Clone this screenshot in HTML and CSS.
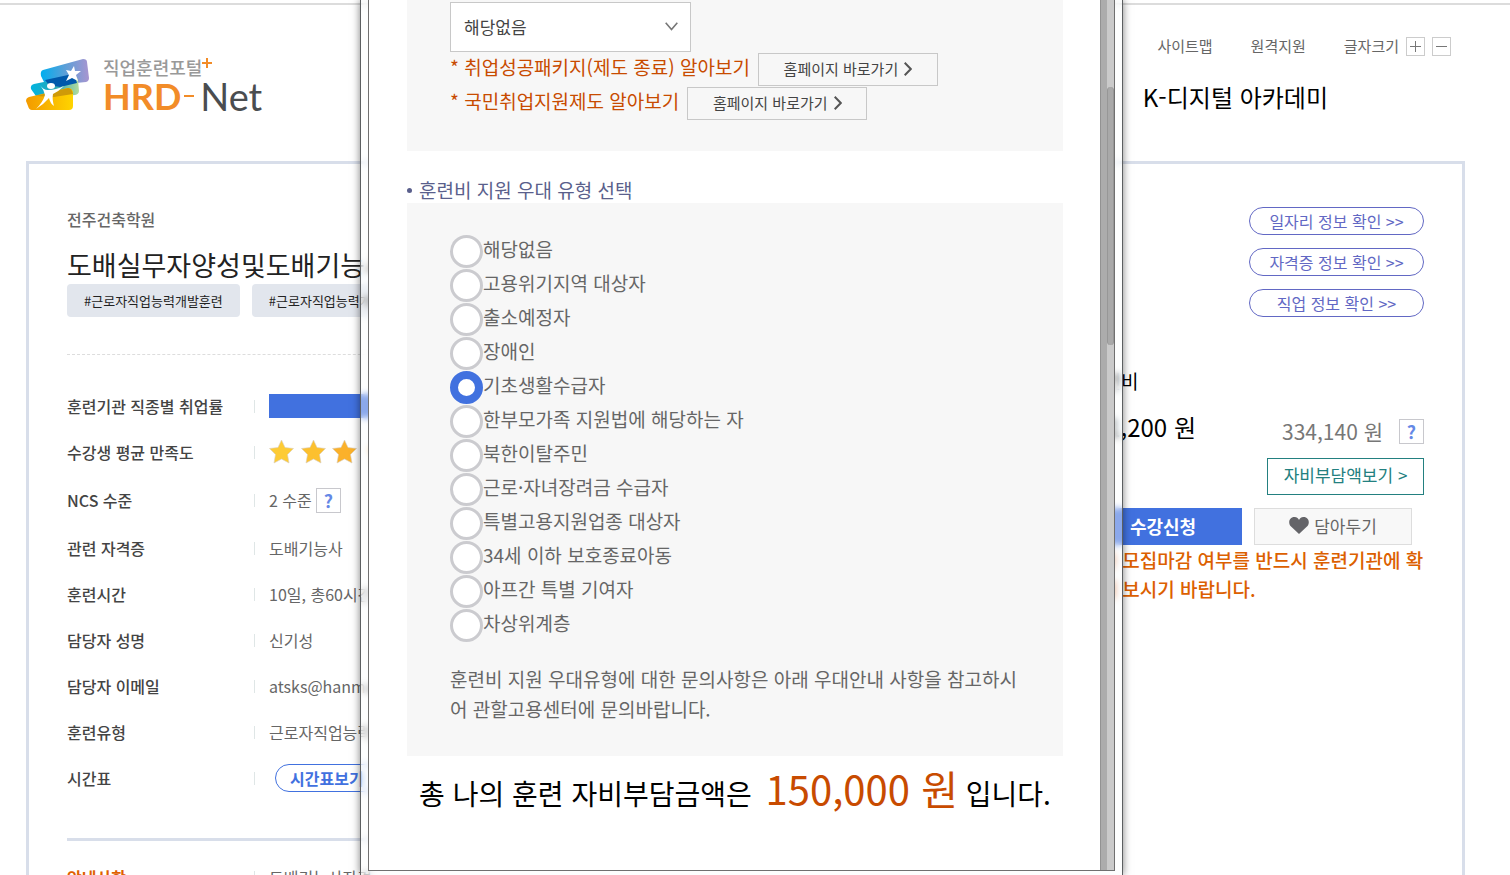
FILE: index.html
```html
<!DOCTYPE html>
<html lang="ko">
<head>
    <meta charset="UTF-8">
    <meta name="viewport" content="width=device-width, initial-scale=1.0">
    <title>직업훈련포털 HRD-Net</title>
    <link rel="stylesheet" href="styles.css">
</head>
<body>
    <header class="header">
        <a class="logo" href="#">
            <svg class="logo-mark" width="64" height="52" viewBox="0 0 64 52" aria-hidden="true">
                <defs>
                    <linearGradient id="top" x1="0" x2="1"><stop offset="0" stop-color="#00aeef"/><stop offset=".5" stop-color="#5a9fd8"/><stop offset="1" stop-color="#a895d0"/></linearGradient>
                    <linearGradient id="mid" x1="0" x2="1"><stop offset="0" stop-color="#00b4e0"/><stop offset=".5" stop-color="#2ba7b5"/><stop offset="1" stop-color="#b5dc9c"/></linearGradient>
                    <linearGradient id="low" x1="0" x2="1"><stop offset="0" stop-color="#f39a00"/><stop offset="1" stop-color="#ffd400"/></linearGradient>
                </defs>
                <path d="M17 11 L57 0 Q61 0 61 3 L63 19 Q63 22 60 23 L20 27 L15 17 Q14 12 17 11 Z" fill="url(#top)"/>
                <path d="M8 25 L47 17 Q51 17 52 21 L53 32 Q53 35 49 36 L12 40 L5 30 Q4 26 8 25 Z" fill="url(#mid)"/>
                <path d="M19 21 L42 16 Q49 16 51 24 L34 28 L23 26 Z" fill="#0059ab"/>
                <path d="M3 38 L42 29 Q46 29 47 33 L47 47 Q47 51 43 51 L6 51 Q3 51 2 47 L0 42 Q0 39 3 38 Z" fill="url(#low)"/>
                <path d="M10 37 L42 29 Q46 29 47 35 L28 38 Z" fill="#cf9a08"/>
                <path d="M14 26 Q17 31 22 31 Q30 31 38 27 Q33 32 27 35 Q26 40 28 47 Q24 44 23 39 Q18 45 10 50 Q17 43 19 36 Q18 31 14 26 Z" fill="#fff"/>
                <ellipse cx="25" cy="27" rx="4" ry="3" fill="#fff"/>
                <path d="M48 7 L49 12 L55 12 L50 16 L52 22 L46 19 L40 22 L43 16 L40 11 L45 12 Z" fill="#fff"/>
            </svg>
            <span class="logo-text">
                <span class="logo-sub">직업훈련포털<svg width="10" height="10" viewBox="0 0 10 10" aria-hidden="true"><path d="M5 0v10M0 5h10" stroke="#f28c28" stroke-width="2"/></svg></span>
                <span class="logo-name"><b>HRD</b><i></i><span>Net</span></span>
            </span>
        </a>
        <div class="header-right">
            <nav class="util">
                <a href="#">사이트맵</a>
                <a href="#">원격지원</a>
                <span class="font-size">글자크기
                    <button type="button" aria-label="크게"><svg width="13" height="13" viewBox="0 0 13 13"><path d="M6.500 1v11M1 6.500h11" stroke="#777"/></svg></button>
                    <button type="button" aria-label="작게"><svg width="13" height="13" viewBox="0 0 13 13"><path d="M1 6.500h11" stroke="#777"/></svg></button>
                </span>
            </nav>
            <a class="gnb" href="#">K-디지털 아카데미</a>
        </div>
    </header>

    <main class="course">
        <section class="info">
            <p class="school">전주건축학원</p>
            <h1>도배실무자양성및도배기능사</h1>
            <div class="tags">
                <span>#근로자직업능력개발훈련</span>
                <span>#근로자직업능력개발훈련</span>
            </div>
            <dl class="detail">
                <div class="row"><dt>훈련기관 직종별 취업률</dt><dd><span class="bar"></span></dd></div>
                <div class="row"><dt>수강생 평균 만족도</dt>
                    <dd>
                        <svg class="stars" width="160" height="26" viewBox="0 0 160 26" aria-hidden="true">
                            <defs>
                                <path id="star" d="M12.500 1 L16 8.500 L24.500 9.500 L18.500 15.500 L20 24 L12.500 20 L5 24 L6.500 15.500 L.5 9.500 L9 8.500 Z" stroke="#d8cfc0" stroke-width=".6"/>
                            </defs>
                            <use href="#star" fill="#fdcb35"/>
                            <use href="#star" x="32" fill="#fcc02f"/>
                            <use href="#star" x="63" fill="#fbb12a"/>
                            <use href="#star" x="98" fill="#faa526"/>
                            <use href="#star" x="130" fill="#f99a22"/>
                        </svg>
                    </dd>
                </div>
                <div class="row row-tall"><dt>NCS 수준</dt><dd>2 수준<button type="button" class="help">?</button></dd></div>
                <div class="row"><dt>관련 자격증</dt><dd>도배기능사</dd></div>
                <div class="row"><dt>훈련시간</dt><dd>10일, 총60시간</dd></div>
                <div class="row"><dt>담당자 성명</dt><dd>신기성</dd></div>
                <div class="row"><dt>담당자 이메일</dt><dd>atsks@hanmail</dd></div>
                <div class="row"><dt>훈련유형</dt><dd>근로자직업능력</dd></div>
                <div class="row"><dt>시간표</dt><dd><button type="button" class="timetable">시간표보기</button></dd></div>
            </dl>
            <dl class="detail notice">
                <div class="row"><dt>안내사항</dt><dd>도배기능사자격</dd></div>
            </dl>
        </section>

        <aside class="side">
            <div class="links">
                <a href="#">일자리 정보 확인 &gt;&gt;</a>
                <a href="#">자격증 정보 확인 &gt;&gt;</a>
                <a href="#">직업 정보 확인 &gt;&gt;</a>
            </div>
            <p class="cost-title">훈련비</p>
            <div class="cost">
                <strong>1,200 원</strong>
                <span>334,140 원</span>
                <button type="button" class="help">?</button>
            </div>
            <button type="button" class="self-pay">자비부담액보기 &gt;</button>
            <div class="actions">
                <button type="button" class="apply">수강신청</button>
                <button type="button" class="keep">
                    <svg width="20" height="17" viewBox="0 0 20 17" aria-hidden="true"><path d="M10 17 L1.500 9 C-1 6 0 0 5.500 0 C8 0 9.500 1.500 10 3 C10.500 1.500 12 0 14.500 0 C20 0 21 6 18.500 9 Z" fill="#646468"/></svg>
                    담아두기
                </button>
            </div>
            <p class="warning">강좌 모집마감 여부를 반드시 훈련기관에 확인해 보시기 바랍니다.</p>
        </aside>
    </main>

    <div class="popup">
        <div class="popup-inner">
            <form class="popup-content">
                <div class="panel panel-top">
                    <div class="select">
                        <select aria-label="취업지원 유형"><option>해당없음</option></select>
                        <svg width="13" height="9" viewBox="0 0 13 9" aria-hidden="true"><path d="M.7 .7 L6.500 7.500 L12.300 .7" fill="none" stroke="#777" stroke-width="1.600"/></svg>
                    </div>
                    <div class="guide">
                        <span>* 취업성공패키지(제도 종료) 알아보기</span>
                        <button type="button">홈페이지 바로가기<svg width="8" height="14" viewBox="0 0 8 14"><path d="M.7 .7 L6.800 7 L.7 13.300" fill="none" stroke="#555" stroke-width="2"/></svg></button>
                    </div>
                    <div class="guide">
                        <span>* 국민취업지원제도 알아보기</span>
                        <button type="button">홈페이지 바로가기<svg width="8" height="14" viewBox="0 0 8 14"><path d="M.7 .7 L6.800 7 L.7 13.300" fill="none" stroke="#555" stroke-width="2"/></svg></button>
                    </div>
                </div>

                <h2>훈련비 지원 우대 유형 선택</h2>
                <div class="panel panel-type">
                    <label><input type="radio" name="type"><span>해당없음</span></label>
                    <label><input type="radio" name="type"><span>고용위기지역 대상자</span></label>
                    <label><input type="radio" name="type"><span>출소예정자</span></label>
                    <label><input type="radio" name="type"><span>장애인</span></label>
                    <label><input type="radio" name="type" checked><span>기초생활수급자</span></label>
                    <label><input type="radio" name="type"><span>한부모가족 지원법에 해당하는 자</span></label>
                    <label><input type="radio" name="type"><span>북한이탈주민</span></label>
                    <label><input type="radio" name="type"><span>근로·자녀장려금 수급자</span></label>
                    <label><input type="radio" name="type"><span>특별고용지원업종 대상자</span></label>
                    <label><input type="radio" name="type"><span>34세 이하 보호종료아동</span></label>
                    <label><input type="radio" name="type"><span>아프간 특별 기여자</span></label>
                    <label><input type="radio" name="type"><span>차상위계층</span></label>
                    <p>훈련비 지원 우대유형에 대한 문의사항은 아래 우대안내 사항을 참고하시어 관할고용센터에 문의바랍니다.</p>
                </div>

                <p class="total">총 나의 훈련 자비부담금액은 <strong>150,000 원</strong> 입니다.</p>
            </form>
            <div class="scroll-outer"></div>
            <div class="scroll"><div class="thumb"></div></div>
        </div>
    </div>
</body>
</html>
```
FILE: styles.css
```css
* {
    box-sizing: border-box;
}

body {
    position: relative;
    height: 100vh;
    margin: 0;
    padding: 3px 45px 0 26px;
    overflow: hidden;
    background-color: #fff;
    color: #666;
    font-family: "Noto Sans CJK KR", "Noto Sans", sans-serif;
    font-size: 16px;
    line-height: 24px;
}

p, h1, h2, dl, dd {
    margin: 0;
}

a {
    color: inherit;
    text-decoration: none;
}

button, select {
    padding: 0;
    font-family: inherit;
    font-size: inherit;
    color: inherit;
    line-height: 24px;
    cursor: pointer;
}

/* header */
.header {
    display: flex;
    justify-content: space-between;
    height: 158px;
    margin: 0 -45px 0 -26px;
    padding: 0 45px 0 26px;
    border-top: 2px solid #dcdcdc;
}

.logo {
    display: flex;
    gap: 13px;
    padding-top: 51px;
}

.logo-mark {
    margin-top: 3px;
}

.logo-text {
    display: flex;
    flex-direction: column;
}

.logo-sub {
    display: flex;
    font-size: 18px;
    line-height: 22px;
    font-weight: 500;
    color: #999;
}

.logo-sub svg {
    margin-top: 2px;
}

.logo-name {
    display: flex;
    align-items: center;
    font-family: Lato, sans-serif;
    font-size: 38px;
    line-height: 36px;
    color: #4a4d50;
}

.logo-name b {
    font-size: 36px;
    color: #f28c28;
}

.logo-name i {
    width: 10px;
    height: 2px;
    margin: 0 6px 0 3px;
    background-color: #f28c28;
}

.logo-name span {
    font-weight: 400;
}

.header-right {
    padding-top: 29px;
}

.util {
    display: flex;
    justify-content: flex-end;
    gap: 38px;
    padding-right: 14px;
    font-size: 15px;
}

.font-size {
    display: flex;
    align-items: center;
    gap: 7px;
}

.font-size button {
    display: flex;
    align-items: center;
    justify-content: center;
    width: 19px;
    height: 19px;
    border: 1px solid #ccc;
    background-color: #fff;
}

.gnb {
    display: block;
    margin-top: 23px;
    padding-right: 137px;
    font-size: 24px;
    line-height: 32px;
    color: #000;
}

/* course */
.course {
    display: flex;
    justify-content: space-between;
    min-height: 100vh;
    padding: 43px 38px;
    border: 3px solid #d8deea;
}

.info {
    width: 700px;
}

.school {
    font-weight: 500;
}

h1 {
    margin-top: 15px;
    font-size: 27px;
    line-height: 38px;
    font-weight: 400;
    color: #222;
}

.tags {
    display: flex;
    gap: 12px;
    padding-bottom: 37px;
    border-bottom: 1px dashed #ddd;
}

.tags span {
    padding: 0 17px;
    border-radius: 4px;
    background-color: #e2e6ed;
    font-size: 13px;
    line-height: 33px;
    color: #222;
}

.detail {
    padding: 28px 0 37px;
}

.row {
    display: flex;
    align-items: center;
    height: 46px;
}

.row-tall {
    height: 50px;
}

.row dt {
    width: 187px;
    font-weight: 500;
    color: #444;
}

.row dd {
    display: flex;
    align-items: center;
}

.row dd::before {
    content: "";
    width: 1px;
    height: 13px;
    margin-right: 14px;
    background-color: #dfe6e6;
}

.bar {
    width: 300px;
    height: 24px;
    background-color: #4171df;
}

.help {
    width: 25px;
    height: 25px;
    margin-left: 4px;
    border: 1px solid #c8c8cd;
    background-color: #fff;
    font-size: 18px;
    line-height: 20px;
    font-weight: 700;
    color: #6488e6;
}

.timetable {
    height: 28px;
    margin-left: 6px;
    padding: 0 14px;
    border: 1px solid #4171df;
    border-radius: 14px;
    background-color: #fff;
    font-weight: 700;
    color: #4171df;
}

.notice {
    padding-top: 13px;
    border-top: 3px solid #d8deea;
}

.notice dt {
    font-weight: 700;
    color: #e06000;
}

/* right side */
.side {
    display: flex;
    flex-direction: column;
    align-items: flex-end;
    width: 342px;
}

.links {
    display: flex;
    flex-direction: column;
    gap: 13px;
}

.links a {
    width: 175px;
    border: 1px solid #6268c4;
    border-radius: 14px;
    font-size: 16px;
    line-height: 26px;
    text-align: center;
    color: #6268c4;
}

.cost-title {
    align-self: flex-start;
    margin-top: 52px;
    padding-left: 4px;
    font-size: 19px;
    color: #000;
}

.cost {
    display: flex;
    align-items: center;
    margin-top: 16px;
    line-height: 36px;
}

.cost strong {
    margin-right: 86px;
    padding-bottom: 8px;
    font-size: 24px;
    font-weight: 400;
    color: #000;
}

.cost span {
    margin-right: 12px;
    font-size: 21px;
    color: #777;
}

.self-pay {
    width: 157px;
    height: 37px;
    margin-top: 5px;
    padding-bottom: 3px;
    border: 1px solid #238080;
    background-color: #fff;
    font-size: 17px;
    color: #238080;
}

.actions {
    display: flex;
    gap: 12px;
    margin: 13px 12px 0 0;
}

.actions button {
    display: flex;
    align-items: center;
    justify-content: center;
    gap: 5px;
    width: 158px;
    height: 37px;
    padding-bottom: 2px;
    border: 1px solid #ddd;
    background-color: #f8f8f8;
    font-size: 17px;
}

.actions .apply {
    border-color: #4171df;
    background-color: #4171df;
    font-size: 18px;
    font-weight: 700;
    color: #fff;
}

.warning {
    font-size: 19px;
    line-height: 29px;
    font-weight: 500;
    word-break: break-all;
    color: #dc6000;
}

/* popup window */
.popup {
    position: absolute;
    top: 0;
    bottom: 0;
    left: 360px;
    width: 763px;
    padding: 0 7px 4px;
    border: solid #5c5f61;
    border-width: 0 1px;
    background-color: rgba(250, 253, 253, 0.4);
    backdrop-filter: blur(3px);
    box-shadow: 0 0 8px rgba(0, 0, 0, 0.5);
}

.popup-inner {
    display: flex;
    height: 100%;
    border: solid #707070;
    border-width: 0 1px 1px;
    background-color: #fff;
}

.popup-content {
    flex: 1;
    padding: 0 37px 0 38px;
}

.scroll-outer {
    width: 7px;
    border-left: 1px solid #929292;
    background-color: #acacac;
}

.scroll {
    width: 7px;
    padding-top: 87px;
    background-color: #cacaca;
}

.thumb {
    height: 258px;
    border: solid #979797;
    border-width: 0 1px;
    border-radius: 4px;
    background-color: #a9a9a9;
}

.panel {
    padding: 0 43px;
    background-color: #f7f7f7;
    font-size: 19px;
}

.panel-top {
    padding-top: 2px;
    padding-bottom: 30px;
}

.select {
    position: relative;
    width: 241px;
    margin-bottom: 1px;
}

.select select {
    display: block;
    width: 100%;
    height: 50px;
    padding: 0 13px;
    appearance: none;
    border: 1px solid #c8c8c8;
    border-radius: 0;
    background-color: #fff;
    font-size: 17px;
    color: #444;
}

.select svg {
    position: absolute;
    top: 20px;
    right: 13px;
    pointer-events: none;
}

.guide {
    display: flex;
    gap: 8px;
    height: 34px;
    line-height: 28px;
    color: #c84b00;
}

.guide button {
    display: flex;
    align-items: center;
    justify-content: center;
    gap: 6px;
    width: 180px;
    height: 33px;
    padding-bottom: 2px;
    border: 1px solid #c8c8c8;
    background-color: #f7f7f7;
    font-size: 15px;
    color: #444;
}

h2 {
    display: flex;
    align-items: center;
    gap: 7px;
    margin-top: 26px;
    font-size: 19px;
    line-height: 26px;
    font-weight: 400;
    color: #5a5f8c;
}

h2::before {
    content: "";
    width: 5px;
    height: 5px;
    border-radius: 50%;
    background-color: #5a5f8c;
}

.panel-type {
    padding-top: 31px;
    padding-bottom: 32px;
}

.panel-type label {
    display: flex;
    align-items: center;
    height: 34px;
}

.panel-type input {
    width: 33px;
    height: 33px;
    margin: 0;
    appearance: none;
    border: 3px solid #cbcbcf;
    border-radius: 50%;
    background-color: #fff;
}

.panel-type input:checked {
    border: 8px solid #4171df;
}

.panel-type label span {
    padding-bottom: 4px;
}

.panel-type p {
    margin-top: 22px;
    line-height: 30px;
    word-break: break-all;
}

.total {
    margin-top: 2px;
    font-size: 28px;
    line-height: 60px;
    text-align: center;
    white-space: nowrap;
    color: #000;
}

.total strong {
    margin-left: 6px;
    font-size: 40px;
    font-weight: 400;
    color: #c84b00;
}
```
